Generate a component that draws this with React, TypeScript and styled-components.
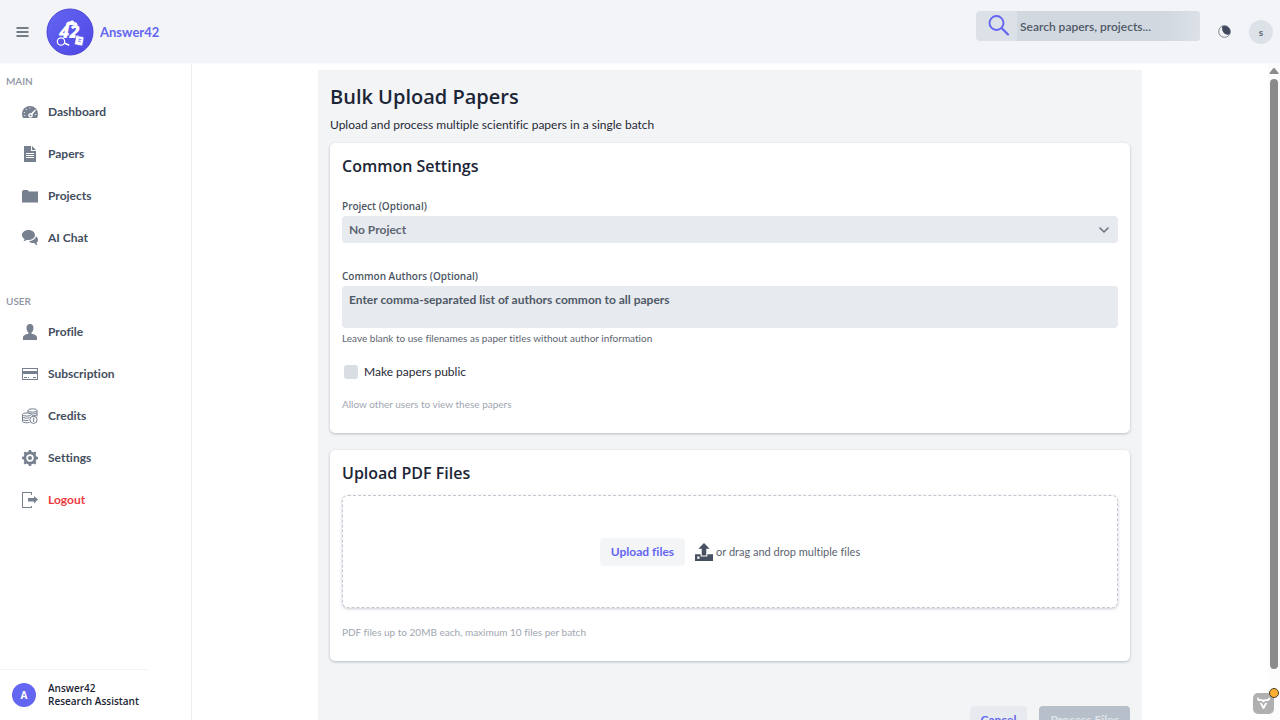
import React from 'react';
import styled, { createGlobalStyle } from 'styled-components';

const displayFont = '"Open Sans", "Noto Sans", sans-serif';

const GlobalStyle = createGlobalStyle`
  *, *::before, *::after { box-sizing: border-box; }
  body {
    margin: 0;
    background: #ffffff;
    color: #1f2937;
    font-family: Lato, "Open Sans", sans-serif;
    font-size: 12px;
    font-variant-ligatures: none;
    line-height: 16px;
  }
  button, input, select, textarea { font: inherit; color: inherit; }
  h1, h2, p, ul { margin: 0; padding: 0; }
  svg { display: block; flex: none; }
`;

const Shell = styled.div`
  display: flex;
  flex-direction: column;
  height: 100vh;
  overflow: hidden;
`;

const Header = styled.header`
  display: flex;
  align-items: center;
  flex: none;
  height: 64px;
  padding: 0 7px 0 16px;
  background: #f3f4f8;
  border-bottom: 1px solid #f9fafb;
`;

const IconButton = styled.button`
  display: flex;
  padding: 0;
  border: 0;
  background: none;
  color: #4b5563;
  cursor: pointer;
`;

const Brand = styled.a`
  display: flex;
  align-items: center;
  gap: 6px;
  margin-left: 16px;
  color: #6366f1;
  font-size: 13px;
  font-weight: 700;
  text-decoration: none;
`;

const HeaderActions = styled.div`
  display: flex;
  align-items: center;
  gap: 18px;
  height: 100%;
  margin-left: auto;
`;

const SearchBox = styled.label`
  display: flex;
  align-items: center;
  align-self: flex-start;
  width: 224px;
  height: 30px;
  margin-top: 11px;
  padding-left: 11px;
  gap: 6px;
  overflow: hidden;
  border-radius: 4px;
  background: #dce1e8;
  color: #6366f1;
`;

const SearchInput = styled.input`
  flex: 1;
  min-width: 0;
  height: 100%;
  padding: 0 3px;
  border: 0;
  outline: 0;
  background: linear-gradient(90deg, #d2d8e0 80%, #dce1e8);
  font-weight: 600;
  &::placeholder { color: #4f5967; opacity: 1; }
`;

const Avatar = styled.span<{ $primary?: boolean }>`
  display: flex;
  align-items: center;
  justify-content: center;
  flex: none;
  width: 24px;
  height: 24px;
  border-radius: 50%;
  background: ${(p) => (p.$primary ? '#6366f1' : '#dde2e8')};
  color: ${(p) => (p.$primary ? '#ffffff' : '#5b6573')};
  font-size: 10px;
  font-weight: 700;
`;

const Body = styled.div`
  display: flex;
  flex: 1;
  min-height: 0;
`;

const Sidebar = styled.nav`
  display: flex;
  flex-direction: column;
  flex: none;
  width: 192px;
  padding-top: 8px;
  border-right: 1px solid #eceef1;
`;

const NavGroup = styled.section`
  margin-bottom: 33px;
`;

const NavHeading = styled.h2`
  padding-left: 6px;
  color: #8d95a3;
  font-size: 10px;
  font-weight: 600;
  line-height: 19px;
`;

const NavList = styled.ul`
  list-style: none;
`;

const NavLink = styled.a<{ $danger?: boolean }>`
  display: flex;
  align-items: center;
  gap: 10px;
  height: 42px;
  padding: 0 22px;
  color: ${(p) => (p.$danger ? '#ee3b3f' : '#434e5e')};
  font-weight: 700;
  text-decoration: none;
  svg { color: #77808f; }
`;

const Account = styled.div`
  display: flex;
  align-items: center;
  gap: 12px;
  width: 148px;
  height: 51px;
  margin-top: auto;
  padding-left: 12px;
  border-top: 1px solid #f3f4f6;
  color: #1a2333;
  font-family: ${displayFont};
  font-size: 10px;
  font-weight: 600;
  line-height: 13px;
  white-space: nowrap;
`;

const Main = styled.main`
  flex: 1;
  min-width: 0;
  padding: 6px 16px 0;
  overflow-y: auto;
  scrollbar-width: none;
`;

const ScrollRail = styled.div`
  display: flex;
  flex-direction: column;
  align-items: center;
  flex: none;
  gap: 5px;
  width: 12px;
  padding: 4px 0 51px;
  background: #fcfcfc;
  color: #8b8b8b;
`;

const ScrollThumb = styled.div`
  flex: 1;
  width: 8px;
  border-radius: 4px;
  background: #8b8b8b;
`;

const Panel = styled.div`
  max-width: 824px;
  margin: 0 auto;
  padding: 12px;
  background: #f3f4f6;
`;

const PageTitle = styled.h1`
  color: #1b2536;
  font-family: ${displayFont};
  font-size: 20px;
  font-weight: 600;
  line-height: 30px;
`;

const Lead = styled.p`
  margin: 4px 0 9px;
  line-height: 18px;
`;

const Card = styled.section`
  margin-bottom: 17px;
  padding: 11px 12px 20px;
  border-radius: 5px;
  background: #ffffff;
  box-shadow: 0 1px 3px rgba(30, 45, 70, 0.28);
`;

const CardTitle = styled.h2`
  color: #1b2536;
  font-family: ${displayFont};
  font-size: 16px;
  font-weight: 600;
  line-height: 24px;
`;

const Field = styled.div`
  display: flex;
  flex-direction: column;
  gap: 2px;
  margin-top: 20px;
`;

const FieldLabel = styled.label`
  color: #4b5563;
  font-family: ${displayFont};
  font-size: 10px;
  font-weight: 600;
`;

const SelectWrap = styled.div`
  display: grid;
  align-items: center;
  margin-bottom: 5px;
  > * { grid-area: 1 / 1; }
  svg { justify-self: end; margin-right: 9px; color: #6b7280; pointer-events: none; }
`;

const Select = styled.select`
  width: 100%;
  height: 27px;
  padding: 0 7px;
  appearance: none;
  border: 0;
  border-radius: 4px;
  background: #e7eaee;
  color: #5c6573;
  font-weight: 700;
`;

const TextArea = styled.textarea`
  display: block;
  width: 100%;
  height: 42px;
  padding: 5px 7px;
  resize: none;
  border: 0;
  border-radius: 4px;
  background: #e7eaee;
  font-weight: 700;
  line-height: 18px;
  &::placeholder { color: #4f5967; opacity: 1; }
`;

const Hint = styled.p<{ $muted?: boolean }>`
  color: ${(p) => (p.$muted ? '#a1a6b0' : '#5b6470')};
  font-size: 10px;
  line-height: 17px;
`;

const CheckRow = styled.label`
  display: flex;
  align-items: center;
  gap: 6px;
  margin: 15px 0 14px;
  padding-left: 2px;
  color: #1f2937;
  line-height: 20px;
`;

const Checkbox = styled.input`
  width: 14px;
  height: 14px;
  margin: 0;
  appearance: none;
  border-radius: 3px;
  background: #d9dee4;
  &:checked { background: #6366f1; }
`;

const DropZone = styled.div`
  display: flex;
  align-items: center;
  justify-content: center;
  gap: 10px;
  height: 113px;
  margin: 10px 0 16px;
  border: 1px dashed #c3c8d0;
  border-radius: 6px;
  box-shadow: 0 1px 3px rgba(30, 45, 70, 0.24);
`;

const DropLabel = styled.span`
  display: flex;
  align-items: center;
  gap: 3px;
  color: #5b6470;
  font-size: 11px;
  svg { color: #475161; }
`;

const Button = styled.button<{ $variant: 'plain' | 'soft' | 'solid' }>`
  height: 28px;
  padding: 0 11px;
  border: 0;
  border-radius: 4px;
  background: ${(p) => ({ plain: '#f4f5f7', soft: '#e7eaee', solid: '#b7c0ca' })[p.$variant]};
  color: ${(p) => (p.$variant === 'solid' ? '#dfe4e9' : '#6366f1')};
  font-weight: 700;
  white-space: nowrap;
`;

const FormActions = styled.div`
  display: flex;
  justify-content: flex-end;
  gap: 12px;
  padding: 28px 0 24px;
`;

const DevBadge = styled.button`
  position: fixed;
  right: 6px;
  bottom: 6px;
  display: flex;
  align-items: center;
  justify-content: center;
  width: 21px;
  height: 21px;
  padding: 0;
  border: 0;
  border-radius: 5px;
  background: #b0b0b0;
  color: #ffffff;
  &::after {
    content: "";
    position: absolute;
    top: -5px;
    right: -5px;
    width: 10px;
    height: 10px;
    border: 1px solid #4a3d26;
    border-radius: 50%;
    background: #fbb034;
  }
`;

const Glyph = ({ children, size = 16 }: { children: React.ReactNode; size?: number }) => (
  <svg width={size} height={size} viewBox="0 0 16 16" fill="currentColor" aria-hidden="true">
    {children}
  </svg>
);

const icons = {
  dashboard: (
    <Glyph>
      <path d="M8 2a8 8 0 0 0-8 8c0 1.500.4 2.800 1 4h14c.600-1.200 1-2.500 1-4a8 8 0 0 0-8-8z" />
      <g fill="#fff">
        <circle cx="8" cy="4" r=".6" />
        <circle cx="4.300" cy="5.300" r=".6" />
        <circle cx="2.300" cy="8.500" r=".6" />
        <path d="M13.300 5.200L9.300 9.200a2.300 2.300 0 1 0 1.300 1.200L14 6z" />
        <path d="M12.800 10.200h1.600v.8h-1.600zM1.800 11.300h1.500v.8H1.800z" />
      </g>
      <circle cx="8.500" cy="11.300" r=".9" />
    </Glyph>
  ),
  papers: (
    <Glyph>
      <path d="M2 0v16h12V5H9V0zM4 7h8v1H4zm0 2h8v1H4zm0 2h8v1H4z" fillRule="evenodd" />
      <path d="M10 0v4h4z" />
    </Glyph>
  ),
  projects: (
    <Glyph>
      <path d="M0 3.200L1.500 2h4L7 3.500h9V14.500H0z" />
    </Glyph>
  ),
  chat: (
    <Glyph>
      <path d="M6.500 0C2.900 0 0 2.200 0 5c0 1.600 1 3 2.500 3.900 0 .8-.500 1.700-1.200 2.300 1.500-.1 2.700-.7 3.500-1.400.500.1 1.100.2 1.700.2C10.100 10 13 7.800 13 5S10.100 0 6.500 0z" />
      <path d="M14 6.300c-.6 2.700-3.600 4.700-7.200 4.900C7.700 12.400 9.400 13 11 13l1.300-.1c.7.8 1.700 2 3.100 2.300-.5-.7-.8-1.700-.7-2.700.8-.6 1.300-1.500 1.300-2.500 0-1.500-.7-2.800-2-3.700z" />
    </Glyph>
  ),
  profile: (
    <Glyph>
      <path d="M8 0C5.900 0 4.500 1.600 4.500 3.900c0 2.200.8 3.800 2 4.600v1.300C3.800 10.300 1 11.300 1 13.500V16h14v-2.500c0-2.200-2.800-3.200-5.500-3.700V8.500c1.200-.8 2-2.400 2-4.600C11.500 1.600 10.100 0 8 0z" />
    </Glyph>
  ),
  subscription: (
    <Glyph>
      <path d="M0 2v12h16V2zm1 1h14v2H1zm0 5h14v5H1z" fillRule="evenodd" />
      <path d="M2 11h3v1H2zm4 0h1v1H6zm5 0h3v1h-3z" />
    </Glyph>
  ),
  credits: (
    <Glyph>
      <g fill="none" stroke="currentColor" strokeWidth="1">
        <ellipse cx="10.500" cy="2.500" rx="4.500" ry="1.700" />
        <path d="M6 2.500V5M15 2.500v6M7 5.400c2.500 1 6.500.7 8-.9M10 7.800c2.200 0 4.200-.5 5-1.300" />
        <ellipse cx="5" cy="6.500" rx="4.500" ry="1.600" />
        <path d="M.5 6.500v7c1 1.300 4.500 1.600 7 1M.5 9c1 1.300 5 1.500 7 .7M.5 11.300c1 1.200 4 1.500 6.200 1" />
        <circle cx="11.500" cy="11.800" r="3.600" />
      </g>
      <path d="M10.500 10.200l1-.7h.7v4.500h-1v-3.500z" />
    </Glyph>
  ),
  settings: (
    <Glyph>
      <path
        fillRule="evenodd"
        d="M16 9V7l-1.700-.6c-.2-.6-.4-1.200-.7-1.800l.8-1.600L13 1.600l-1.600.8c-.5-.3-1.100-.6-1.800-.7L9 0H7l-.6 1.700c-.6.2-1.200.4-1.700.7l-1.600-.8-1.500 1.500.8 1.600c-.3.5-.5 1.100-.7 1.700L0 7v2l1.700.6c.2.6.4 1.200.7 1.800L1.600 13 3 14.400l1.600-.8c.5.3 1.100.6 1.800.7L7 16h2l.6-1.700c.6-.2 1.200-.4 1.800-.7l1.600.8 1.400-1.400-.8-1.600c.3-.5.6-1.100.7-1.800zM8 11.700a3.700 3.700 0 1 1 0-7.400 3.700 3.700 0 0 1 0 7.400z"
      />
      <circle cx="8" cy="8" r="2" />
    </Glyph>
  ),
  logout: (
    <Glyph>
      <path d="M9 14v1H1V1h8v2h1V0H0v16h10v-2z" />
      <path d="M16 7.500L12 4v2H6v3.500h6v2z" />
    </Glyph>
  ),
};

type LinkItem = { label: string; icon: React.ReactNode; danger?: boolean };

const mainLinks: LinkItem[] = [
  { label: 'Dashboard', icon: icons.dashboard },
  { label: 'Papers', icon: icons.papers },
  { label: 'Projects', icon: icons.projects },
  { label: 'AI Chat', icon: icons.chat },
];

const userLinks: LinkItem[] = [
  { label: 'Profile', icon: icons.profile },
  { label: 'Subscription', icon: icons.subscription },
  { label: 'Credits', icon: icons.credits },
  { label: 'Settings', icon: icons.settings },
  { label: 'Logout', icon: icons.logout, danger: true },
];

const NavSection = ({ title, links }: { title: string; links: LinkItem[] }) => (
  <NavGroup>
    <NavHeading>{title}</NavHeading>
    <NavList>
      {links.map((link) => (
        <li key={link.label}>
          <NavLink href="#" $danger={link.danger}>
            {link.icon}
            {link.label}
          </NavLink>
        </li>
      ))}
    </NavList>
  </NavGroup>
);

const Logo = () => (
  <svg width="48" height="48" viewBox="0 0 48 48" aria-hidden="true">
    <defs>
      <linearGradient id="logoFill" x1="0" y1="0" x2="1" y2="1">
        <stop offset="0" stopColor="#6366f1" />
        <stop offset="1" stopColor="#4f46e5" />
      </linearGradient>
    </defs>
    <circle cx="24" cy="24" r="23" fill="url(#logoFill)" stroke="#4a43d6" />
    <path d="M20 17c0-2.500 2-4 4-3.500 1.500-1.500 4-1 4.500.8 1.700-.3 3 1 3 2.700z" fill="#fff" />
    <text x="13" y="30" fill="#fff" fontFamily="Open Sans, sans-serif" fontSize="18" fontWeight="800" fontStyle="italic">42</text>
    <g fill="none" stroke="#fff" strokeWidth="1.200">
      <circle cx="15" cy="33.500" r="3.700" fill="#5a55e8" />
      <path d="M18.200 35l5 2.200" strokeWidth="1.800" />
    </g>
    <path d="M30 27.500l8 1.500-1.500 9-8-1.500z" fill="#fff" stroke="#554fe6" strokeWidth=".6" />
    <path d="M32.500 31l3 .6M32.200 33l2.500.5" stroke="#6366f1" strokeWidth=".9" />
  </svg>
);

export default function App() {
  return (
    <Shell>
      <GlobalStyle />
      <Header>
        <IconButton aria-label="Toggle menu">
          <svg width="14" height="14" viewBox="0 0 14 14" stroke="currentColor" strokeWidth="1.500" strokeLinecap="round">
            <path d="M1 3h11M1 7h11M1 11h11" />
          </svg>
        </IconButton>
        <Brand href="#">
          <Logo />
          Answer42
        </Brand>
        <HeaderActions>
          <SearchBox>
            <svg width="24" height="24" viewBox="0 0 24 24" fill="none" stroke="currentColor" strokeWidth="1.900" strokeLinecap="round">
              <circle cx="9.500" cy="9" r="7" />
              <path d="M14.800 14.200l6.200 6.300" strokeWidth="2.300" />
            </svg>
            <SearchInput type="text" aria-label="Search" placeholder="Search papers, projects..." />
          </SearchBox>
          <IconButton aria-label="Toggle theme">
            <svg width="13" height="13" viewBox="0 0 13 13">
              <circle cx="6.500" cy="6.500" r="5.800" fill="none" stroke="#7b8491" />
              <path d="M4.500 1A6 6 0 0 1 11.800 9C9.500 10.500 7 9.500 5.500 7.500 4 5.500 3.800 3 4.500 1z" fill="#3f4a5c" />
            </svg>
          </IconButton>
          <Avatar>s</Avatar>
        </HeaderActions>
      </Header>
      <Body>
        <Sidebar>
          <NavSection title="MAIN" links={mainLinks} />
          <NavSection title="USER" links={userLinks} />
          <Account>
            <Avatar $primary>A</Avatar>
            <div>
              <div>Answer42</div>
              <div>Research Assistant</div>
            </div>
          </Account>
        </Sidebar>
        <Main>
          <Panel>
            <PageTitle>Bulk Upload Papers</PageTitle>
            <Lead>Upload and process multiple scientific papers in a single batch</Lead>
            <Card>
              <CardTitle>Common Settings</CardTitle>
              <Field>
                <FieldLabel htmlFor="project">Project (Optional)</FieldLabel>
                <SelectWrap>
                  <Select id="project">
                    <option>No Project</option>
                  </Select>
                  <svg width="10" height="6" viewBox="0 0 10 6" fill="none" stroke="currentColor" strokeWidth="1.600" strokeLinecap="round" strokeLinejoin="round">
                    <path d="M1 1l4 4 4-4" />
                  </svg>
                </SelectWrap>
              </Field>
              <Field>
                <FieldLabel htmlFor="authors">Common Authors (Optional)</FieldLabel>
                <TextArea id="authors" placeholder="Enter comma-separated list of authors common to all papers" />
                <Hint>Leave blank to use filenames as paper titles without author information</Hint>
              </Field>
              <CheckRow>
                <Checkbox type="checkbox" />
                Make papers public
              </CheckRow>
              <Hint $muted>Allow other users to view these papers</Hint>
            </Card>
            <Card>
              <CardTitle>Upload PDF Files</CardTitle>
              <DropZone>
                <Button type="button" $variant="plain">Upload files</Button>
                <DropLabel>
                  <Glyph size={18}>
                    <path d="M11 10v2H5v-2H0v6h16v-6zM4 14H2v-2h2z" />
                    <path d="M13 5L8 0 3 5h3v6h4V5z" />
                  </Glyph>
                  or drag and drop multiple files
                </DropLabel>
              </DropZone>
              <Hint $muted>PDF files up to 20MB each, maximum 10 files per batch</Hint>
            </Card>
            <FormActions>
              <Button type="button" $variant="soft">Cancel</Button>
              <Button type="submit" $variant="solid" disabled>Process Files</Button>
            </FormActions>
          </Panel>
        </Main>
        <ScrollRail>
          <svg width="10" height="6" viewBox="0 0 10 6" fill="currentColor">
            <path d="M4 .6a1.300 1.300 0 0 1 2 0L9.500 5c.3.500 0 1-.5 1H1C.5 6 .2 5.500.5 5z" />
          </svg>
          <ScrollThumb />
        </ScrollRail>
      </Body>
      <DevBadge aria-label="Development tools">
        <svg width="13" height="13" viewBox="0 0 13 13" fill="none" stroke="currentColor" strokeWidth="1.800" strokeLinecap="round" strokeLinejoin="round">
          <path d="M1 1.500c0 1.500.5 1.700 2 1.700h1.700c1.200 0 1.800.3 1.800 1.200 0-.9.6-1.200 1.800-1.200H10c1.500 0 2-.2 2-1.700M4 6.500l2.500 4.500L9 6.500" />
        </svg>
      </DevBadge>
    </Shell>
  );
}
